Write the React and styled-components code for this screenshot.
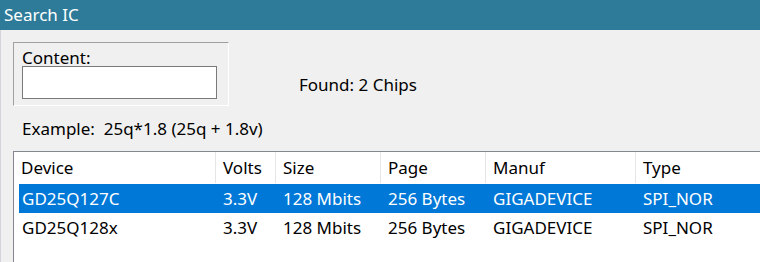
import styled, { createGlobalStyle } from 'styled-components';

const GlobalStyle = createGlobalStyle`
  html, body {
    margin: 0;
    padding: 0;
    background: #f0f0f0;
  }
  body {
    font-family: "Noto Sans", "Open Sans", sans-serif;
    color: #000;
  }
`;

const Window = styled.div`
  width: 760px;
  height: 262px;
  overflow: hidden;
  display: flex;
  flex-direction: column;
  background: #f0f0f0;
`;

const TitleBar = styled.div`
  height: 30px;
  flex: none;
  background: #2d7b99;
  color: #fff;
  font-size: 17px;
  line-height: 30px;
  padding-left: 4px;
`;

const Body = styled.div`
  flex: 1;
  display: flex;
  flex-direction: column;
  padding: 12px 0 0 12px;
  border-left: 1px solid #d6d2da;
  min-height: 0;
  font-size: 17px;
`;

const TopRow = styled.div`
  display: flex;
  align-items: center;
`;

const GroupBox = styled.div`
  box-sizing: border-box;
  width: 216px;
  height: 64px;
  border-top: 1px solid #a0a0a0;
  border-left: 1px solid #a0a0a0;
  border-right: 1px solid #fff;
  border-bottom: 1px solid #fff;
  padding: 6px 0 0 8px;
`;

const FieldLabel = styled.div`
  line-height: 17px;
`;

const TextBox = styled.div`
  box-sizing: border-box;
  width: 195px;
  height: 33px;
  background: #fff;
  border: 1px solid #7a7a7a;
`;

const Found = styled.div`
  margin-left: 70px;
  margin-top: 20px;
`;

const Example = styled.div`
  padding-left: 9px;
  margin-top: 12px;
  line-height: 22px;
  white-space: pre;
`;

const ListView = styled.div`
  margin-top: 11px;
  flex: 1;
  background: #fff;
  border-top: 1px solid #828790;
  border-left: 1px solid #828790;
`;

const Header = styled.div`
  display: grid;
  grid-template-columns: 202px 60px 105px 105px 150px 1fr;
  height: 32px;
`;

const HeadCell = styled.div`
  display: flex;
  align-items: center;
  padding-left: 7px;
  border-right: ${p => (p.$last ? 'none' : '1px solid #e5e5e5')};
  margin-bottom: 1px;
`;

const Row = styled.div`
  display: grid;
  grid-template-columns: 197px 60px 105px 105px 150px 1fr;
  margin-left: 5px;
  height: 29px;
  background: ${p => (p.$selected ? '#0078d7' : 'transparent')};
  color: ${p => (p.$selected ? '#fff' : '#000')};
`;

const Cell = styled.div`
  display: flex;
  align-items: center;
  padding-left: ${p => (p.$first ? '3px' : '7px')};
  white-space: nowrap;
`;

const headers = ['Device', 'Volts', 'Size', 'Page', 'Manuf', 'Type'];

const chips = [
  ['GD25Q127C', '3.3V', '128 Mbits', '256 Bytes', 'GIGADEVICE', 'SPI_NOR'],
  ['GD25Q128x', '3.3V', '128 Mbits', '256 Bytes', 'GIGADEVICE', 'SPI_NOR'],
];

export default function App() {
  return (
    <>
      <GlobalStyle />
      <Window>
        <TitleBar>Search IC</TitleBar>
        <Body>
          <TopRow>
            <GroupBox>
              <FieldLabel>Content:</FieldLabel>
              <TextBox />
            </GroupBox>
            <Found>Found: 2 Chips</Found>
          </TopRow>
          <Example>{'Example:  25q*1.8 (25q + 1.8v)'}</Example>
          <ListView>
            <Header>
              {headers.map((h, i) => (
                <HeadCell key={h} $last={i === headers.length - 1}>{h}</HeadCell>
              ))}
            </Header>
            {chips.map((row, r) => (
              <Row key={row[0]} $selected={r === 0}>
                {row.map((v, i) => (
                  <Cell key={i} $first={i === 0}>{v}</Cell>
                ))}
              </Row>
            ))}
          </ListView>
        </Body>
      </Window>
    </>
  );
}
